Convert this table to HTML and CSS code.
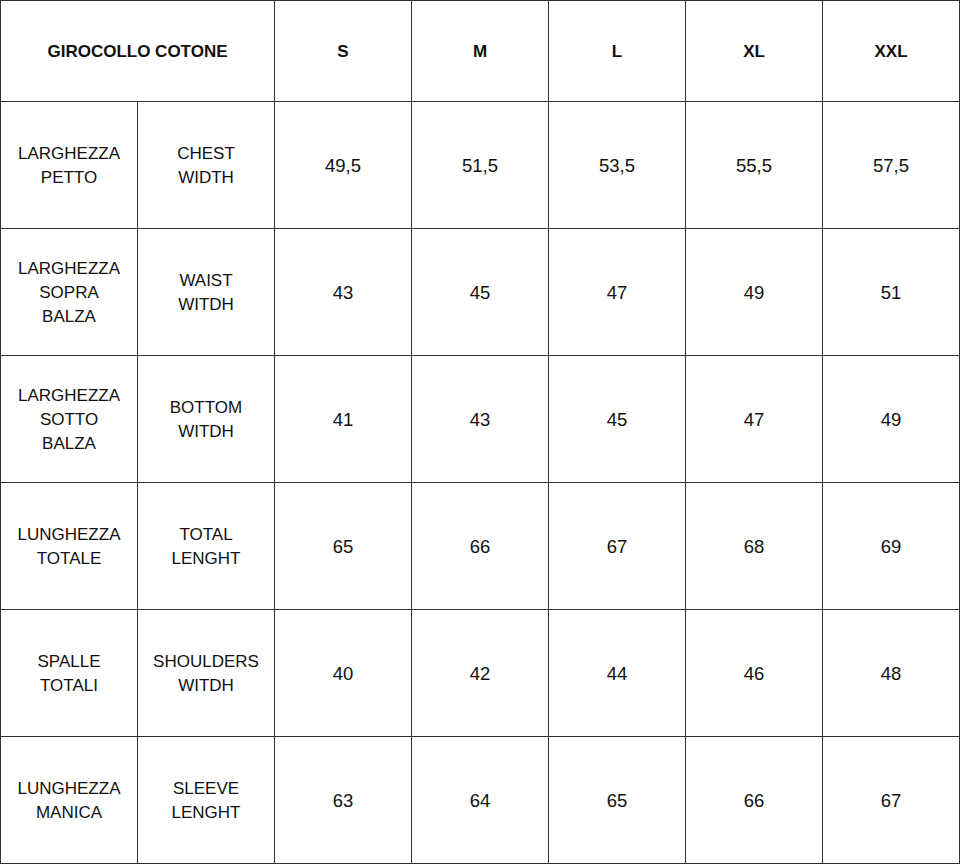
FILE: index.html
```html
<!DOCTYPE html>
<html>
<head>
<meta charset="utf-8">
<link rel="stylesheet" href="styles.css">
</head>
<body>
<div class="chart">
  <div class="cell head span2">GIROCOLLO COTONE</div>
  <div class="cell head">S</div>
  <div class="cell head">M</div>
  <div class="cell head">L</div>
  <div class="cell head">XL</div>
  <div class="cell head">XXL</div>

  <div class="cell">LARGHEZZA<br>PETTO</div>
  <div class="cell">CHEST<br>WIDTH</div>
  <div class="cell num">49,5</div><div class="cell num">51,5</div><div class="cell num">53,5</div><div class="cell num">55,5</div><div class="cell num">57,5</div>

  <div class="cell">LARGHEZZA<br>SOPRA<br>BALZA</div>
  <div class="cell">WAIST<br>WITDH</div>
  <div class="cell num">43</div><div class="cell num">45</div><div class="cell num">47</div><div class="cell num">49</div><div class="cell num">51</div>

  <div class="cell">LARGHEZZA<br>SOTTO<br>BALZA</div>
  <div class="cell">BOTTOM<br>WITDH</div>
  <div class="cell num">41</div><div class="cell num">43</div><div class="cell num">45</div><div class="cell num">47</div><div class="cell num">49</div>

  <div class="cell">LUNGHEZZA<br>TOTALE</div>
  <div class="cell">TOTAL<br>LENGHT</div>
  <div class="cell num">65</div><div class="cell num">66</div><div class="cell num">67</div><div class="cell num">68</div><div class="cell num">69</div>

  <div class="cell">SPALLE<br>TOTALI</div>
  <div class="cell">SHOULDERS<br>WITDH</div>
  <div class="cell num">40</div><div class="cell num">42</div><div class="cell num">44</div><div class="cell num">46</div><div class="cell num">48</div>

  <div class="cell">LUNGHEZZA<br>MANICA</div>
  <div class="cell">SLEEVE<br>LENGHT</div>
  <div class="cell num">63</div><div class="cell num">64</div><div class="cell num">65</div><div class="cell num">66</div><div class="cell num">67</div>
</div>
</body>
</html>
```
FILE: styles.css
```css
html, body {
  margin: 0;
  padding: 0;
  background: #fff;
}
.chart {
  display: grid;
  grid-template-columns: repeat(7, 137px);
  grid-template-rows: 101px repeat(6, 127px);
  width: 960px;
  box-sizing: border-box;
  border-left: 1px solid #333;
  border-top: 1px solid #333;
  font-family: "Liberation Sans", Arial, sans-serif;
  font-size: 17px;
  line-height: 24px;
  color: #111;
}
.cell {
  display: flex;
  align-items: center;
  justify-content: center;
  text-align: center;
  padding-top: 2px;
  border-right: 1px solid #333;
  border-bottom: 1px solid #333;
  box-sizing: border-box;
}
.head {
  font-weight: 700;
}
.num {
  font-size: 18.5px;
}
.span2 {
  grid-column: span 2;
}
```
